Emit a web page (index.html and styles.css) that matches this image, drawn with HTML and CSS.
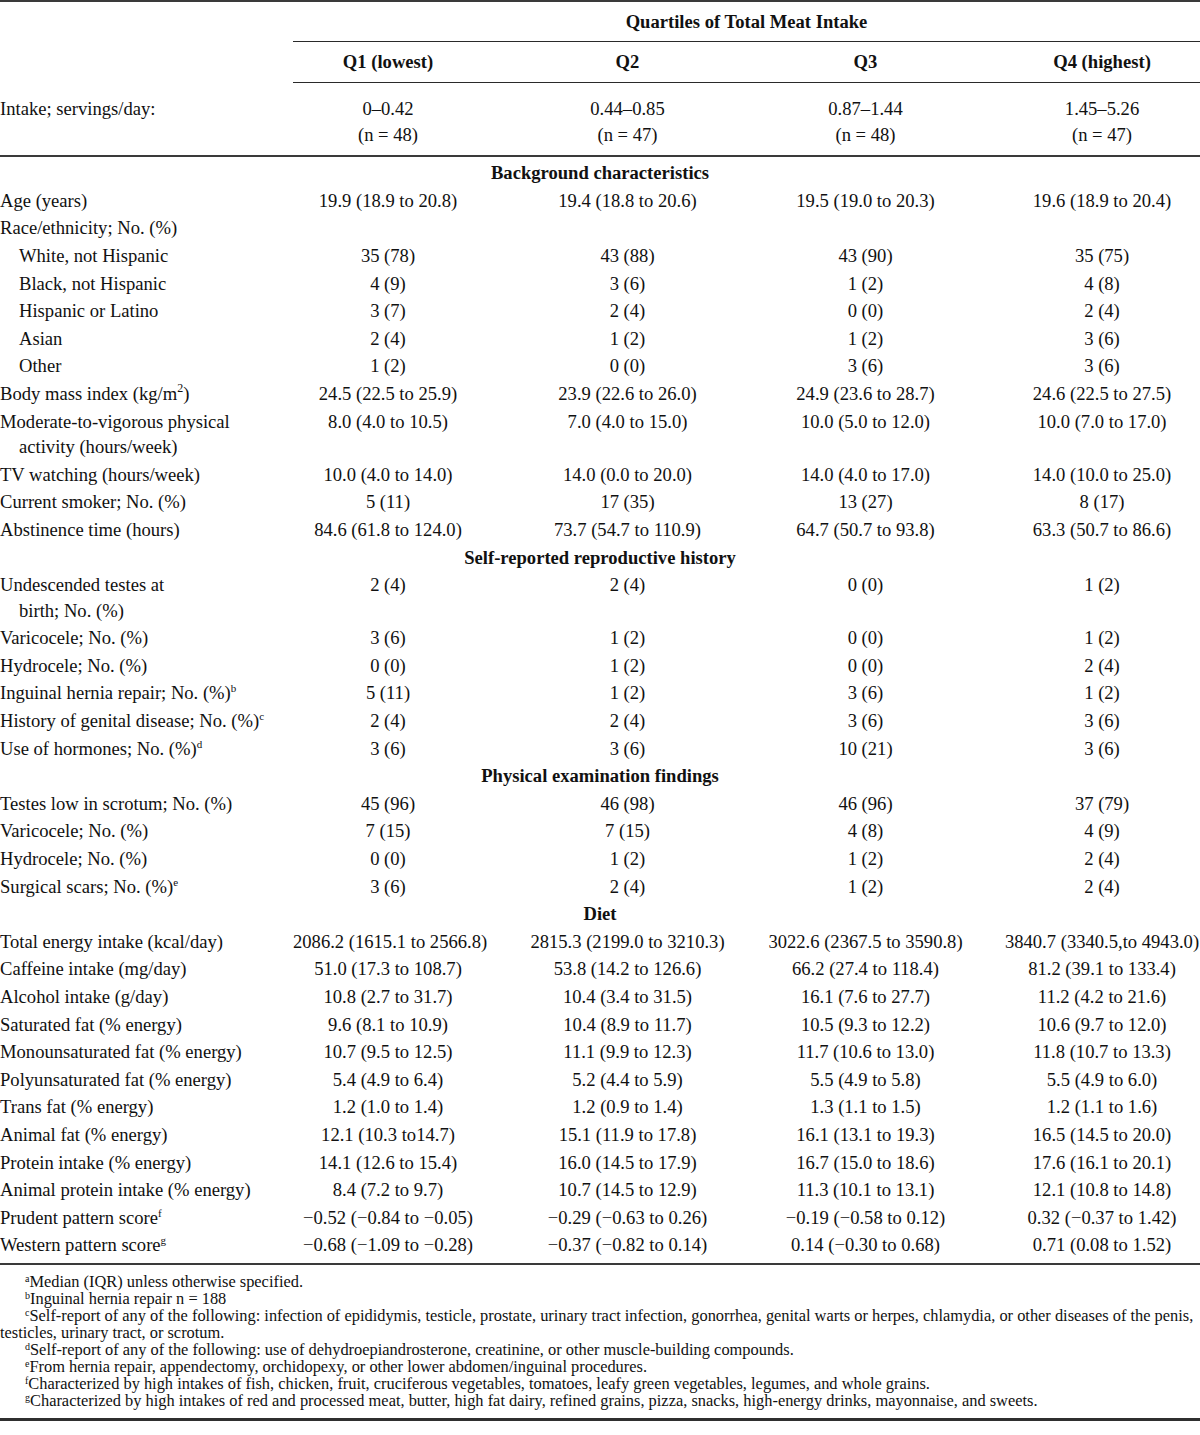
FILE: index.html
```html
<!DOCTYPE html>
<html lang="en">
<head>
<meta charset="utf-8">
<title>Characteristics by quartiles of total meat intake</title>
<link rel="stylesheet" href="styles.css">
</head>
<body>
<div class="page">
<table class="tbl">
  <colgroup>
    <col class="c-label">
    <col class="c-q1">
    <col class="c-q2">
    <col class="c-q3">
    <col class="c-q4">
  </colgroup>
  <thead>
    <tr class="h1">
      <th class="blank"></th>
      <th class="span" colspan="4">Quartiles of Total Meat Intake</th>
    </tr>
    <tr class="h2">
      <th class="blank"></th>
      <th class="q q1">Q1 (lowest)</th>
      <th class="q q2">Q2</th>
      <th class="q q3">Q3</th>
      <th class="q q4">Q4 (highest)</th>
    </tr>
    <tr class="h3">
      <td class="lbl">Intake; servings/day:</td>
      <td class="v q1">0–0.42<br>(n = 48)</td>
      <td class="v q2">0.44–0.85<br>(n = 47)</td>
      <td class="v q3">0.87–1.44<br>(n = 48)</td>
      <td class="v q4">1.45–5.26<br>(n = 47)</td>
    </tr>
  </thead>
  <tbody>
    <tr class="sec first"><td colspan="5">Background characteristics</td></tr>
    <tr><td class="lbl">Age (years)</td><td class="v q1">19.9 (18.9 to 20.8)</td><td class="v q2">19.4 (18.8 to 20.6)</td><td class="v q3">19.5 (19.0 to 20.3)</td><td class="v q4">19.6 (18.9 to 20.4)</td></tr>
    <tr><td class="lbl">Race/ethnicity; No. (%)</td><td class="v q1"></td><td class="v q2"></td><td class="v q3"></td><td class="v q4"></td></tr>
    <tr><td class="lbl sub">White, not Hispanic</td><td class="v q1">35 (78)</td><td class="v q2">43 (88)</td><td class="v q3">43 (90)</td><td class="v q4">35 (75)</td></tr>
    <tr><td class="lbl sub">Black, not Hispanic</td><td class="v q1">4 (9)</td><td class="v q2">3 (6)</td><td class="v q3">1 (2)</td><td class="v q4">4 (8)</td></tr>
    <tr><td class="lbl sub">Hispanic or Latino</td><td class="v q1">3 (7)</td><td class="v q2">2 (4)</td><td class="v q3">0 (0)</td><td class="v q4">2 (4)</td></tr>
    <tr><td class="lbl sub">Asian</td><td class="v q1">2 (4)</td><td class="v q2">1 (2)</td><td class="v q3">1 (2)</td><td class="v q4">3 (6)</td></tr>
    <tr><td class="lbl sub">Other</td><td class="v q1">1 (2)</td><td class="v q2">0 (0)</td><td class="v q3">3 (6)</td><td class="v q4">3 (6)</td></tr>
    <tr><td class="lbl">Body mass index (kg/m<sup class="sq">2</sup>)</td><td class="v q1">24.5 (22.5 to 25.9)</td><td class="v q2">23.9 (22.6 to 26.0)</td><td class="v q3">24.9 (23.6 to 28.7)</td><td class="v q4">24.6 (22.5 to 27.5)</td></tr>
    <tr><td class="lbl">Moderate-to-vigorous physical<br><span class="wrap">activity (hours/week)</span></td><td class="v q1">8.0 (4.0 to 10.5)</td><td class="v q2">7.0 (4.0 to 15.0)</td><td class="v q3">10.0 (5.0 to 12.0)</td><td class="v q4">10.0 (7.0 to 17.0)</td></tr>
    <tr><td class="lbl">TV watching (hours/week)</td><td class="v q1">10.0 (4.0 to 14.0)</td><td class="v q2">14.0 (0.0 to 20.0)</td><td class="v q3">14.0 (4.0 to 17.0)</td><td class="v q4">14.0 (10.0 to 25.0)</td></tr>
    <tr><td class="lbl">Current smoker; No. (%)</td><td class="v q1">5 (11)</td><td class="v q2">17 (35)</td><td class="v q3">13 (27)</td><td class="v q4">8 (17)</td></tr>
    <tr><td class="lbl">Abstinence time (hours)</td><td class="v q1">84.6 (61.8 to 124.0)</td><td class="v q2">73.7 (54.7 to 110.9)</td><td class="v q3">64.7 (50.7 to 93.8)</td><td class="v q4">63.3 (50.7 to 86.6)</td></tr>

    <tr class="sec"><td colspan="5">Self-reported reproductive history</td></tr>
    <tr><td class="lbl">Undescended testes at<br><span class="wrap">birth; No. (%)</span></td><td class="v q1">2 (4)</td><td class="v q2">2 (4)</td><td class="v q3">0 (0)</td><td class="v q4">1 (2)</td></tr>
    <tr><td class="lbl">Varicocele; No. (%)</td><td class="v q1">3 (6)</td><td class="v q2">1 (2)</td><td class="v q3">0 (0)</td><td class="v q4">1 (2)</td></tr>
    <tr><td class="lbl">Hydrocele; No. (%)</td><td class="v q1">0 (0)</td><td class="v q2">1 (2)</td><td class="v q3">0 (0)</td><td class="v q4">2 (4)</td></tr>
    <tr><td class="lbl">Inguinal hernia repair; No. (%)<sup>b</sup></td><td class="v q1">5 (11)</td><td class="v q2">1 (2)</td><td class="v q3">3 (6)</td><td class="v q4">1 (2)</td></tr>
    <tr><td class="lbl">History of genital disease; No. (%)<sup>c</sup></td><td class="v q1">2 (4)</td><td class="v q2">2 (4)</td><td class="v q3">3 (6)</td><td class="v q4">3 (6)</td></tr>
    <tr><td class="lbl">Use of hormones; No. (%)<sup>d</sup></td><td class="v q1">3 (6)</td><td class="v q2">3 (6)</td><td class="v q3">10 (21)</td><td class="v q4">3 (6)</td></tr>

    <tr class="sec"><td colspan="5">Physical examination findings</td></tr>
    <tr><td class="lbl">Testes low in scrotum; No. (%)</td><td class="v q1">45 (96)</td><td class="v q2">46 (98)</td><td class="v q3">46 (96)</td><td class="v q4">37 (79)</td></tr>
    <tr><td class="lbl">Varicocele; No. (%)</td><td class="v q1">7 (15)</td><td class="v q2">7 (15)</td><td class="v q3">4 (8)</td><td class="v q4">4 (9)</td></tr>
    <tr><td class="lbl">Hydrocele; No. (%)</td><td class="v q1">0 (0)</td><td class="v q2">1 (2)</td><td class="v q3">1 (2)</td><td class="v q4">2 (4)</td></tr>
    <tr><td class="lbl">Surgical scars; No. (%)<sup>e</sup></td><td class="v q1">3 (6)</td><td class="v q2">2 (4)</td><td class="v q3">1 (2)</td><td class="v q4">2 (4)</td></tr>

    <tr class="sec"><td colspan="5">Diet</td></tr>
    <tr><td class="lbl">Total energy intake (kcal/day)</td><td class="v q1">2086.2 (1615.1 to 2566.8)</td><td class="v q2">2815.3 (2199.0 to 3210.3)</td><td class="v q3">3022.6 (2367.5 to 3590.8)</td><td class="v q4">3840.7 (3340.5,to 4943.0)</td></tr>
    <tr><td class="lbl">Caffeine intake (mg/day)</td><td class="v q1">51.0 (17.3 to 108.7)</td><td class="v q2">53.8 (14.2 to 126.6)</td><td class="v q3">66.2 (27.4 to 118.4)</td><td class="v q4">81.2 (39.1 to 133.4)</td></tr>
    <tr><td class="lbl">Alcohol intake (g/day)</td><td class="v q1">10.8 (2.7 to 31.7)</td><td class="v q2">10.4 (3.4 to 31.5)</td><td class="v q3">16.1 (7.6 to 27.7)</td><td class="v q4">11.2 (4.2 to 21.6)</td></tr>
    <tr><td class="lbl">Saturated fat (% energy)</td><td class="v q1">9.6 (8.1 to 10.9)</td><td class="v q2">10.4 (8.9 to 11.7)</td><td class="v q3">10.5 (9.3 to 12.2)</td><td class="v q4">10.6 (9.7 to 12.0)</td></tr>
    <tr><td class="lbl">Monounsaturated fat (% energy)</td><td class="v q1">10.7 (9.5 to 12.5)</td><td class="v q2">11.1 (9.9 to 12.3)</td><td class="v q3">11.7 (10.6 to 13.0)</td><td class="v q4">11.8 (10.7 to 13.3)</td></tr>
    <tr><td class="lbl">Polyunsaturated fat (% energy)</td><td class="v q1">5.4 (4.9 to 6.4)</td><td class="v q2">5.2 (4.4 to 5.9)</td><td class="v q3">5.5 (4.9 to 5.8)</td><td class="v q4">5.5 (4.9 to 6.0)</td></tr>
    <tr><td class="lbl">Trans fat (% energy)</td><td class="v q1">1.2 (1.0 to 1.4)</td><td class="v q2">1.2 (0.9 to 1.4)</td><td class="v q3">1.3 (1.1 to 1.5)</td><td class="v q4">1.2 (1.1 to 1.6)</td></tr>
    <tr><td class="lbl">Animal fat (% energy)</td><td class="v q1">12.1 (10.3 to14.7)</td><td class="v q2">15.1 (11.9 to 17.8)</td><td class="v q3">16.1 (13.1 to 19.3)</td><td class="v q4">16.5 (14.5 to 20.0)</td></tr>
    <tr><td class="lbl">Protein intake (% energy)</td><td class="v q1">14.1 (12.6 to 15.4)</td><td class="v q2">16.0 (14.5 to 17.9)</td><td class="v q3">16.7 (15.0 to 18.6)</td><td class="v q4">17.6 (16.1 to 20.1)</td></tr>
    <tr><td class="lbl">Animal protein intake (% energy)</td><td class="v q1">8.4 (7.2 to 9.7)</td><td class="v q2">10.7 (14.5 to 12.9)</td><td class="v q3">11.3 (10.1 to 13.1)</td><td class="v q4">12.1 (10.8 to 14.8)</td></tr>
    <tr><td class="lbl">Prudent pattern score<sup>f</sup></td><td class="v q1">−0.52 (−0.84 to −0.05)</td><td class="v q2">−0.29 (−0.63 to 0.26)</td><td class="v q3">−0.19 (−0.58 to 0.12)</td><td class="v q4">0.32 (−0.37 to 1.42)</td></tr>
    <tr class="last"><td class="lbl">Western pattern score<sup>g</sup></td><td class="v q1">−0.68 (−1.09 to −0.28)</td><td class="v q2">−0.37 (−0.82 to 0.14)</td><td class="v q3">0.14 (−0.30 to 0.68)</td><td class="v q4">0.71 (0.08 to 1.52)</td></tr>
  </tbody>
</table>
<div class="notes">
  <p><sup>a</sup>Median (IQR) unless otherwise specified.</p>
  <p><sup>b</sup>Inguinal hernia repair n = 188</p>
  <p><sup>c</sup>Self-report of any of the following: infection of epididymis, testicle, prostate, urinary tract infection, gonorrhea, genital warts or herpes, chlamydia, or other diseases of the penis,<br>testicles, urinary tract, or scrotum.</p>
  <p><sup>d</sup>Self-report of any of the following: use of dehydroepiandrosterone, creatinine, or other muscle-building compounds.</p>
  <p><sup>e</sup>From hernia repair, appendectomy, orchidopexy, or other lower abdomen/inguinal procedures.</p>
  <p><sup>f</sup>Characterized by high intakes of fish, chicken, fruit, cruciferous vegetables, tomatoes, leafy green vegetables, legumes, and whole grains.</p>
  <p><sup>g</sup>Characterized by high intakes of red and processed meat, butter, high fat dairy, refined grains, pizza, snacks, high-energy drinks, mayonnaise, and sweets.</p>
</div>
</div>
</body>
</html>
```

FILE: styles.css
```css
html, body {
  margin: 0;
  padding: 0;
  background: #ffffff;
}

.page {
  width: 1200px;
  font-family: "Liberation Serif", "Times New Roman", serif;
  color: #111111;
}

.tbl {
  width: 1200px;
  table-layout: fixed;
  border-collapse: separate;
  border-spacing: 0;
  border-top: 2px solid #3a3a3a;
  border-bottom: 2px solid #3a3a3a;
  font-size: 18.6px;
}

.c-label { width: 293px; }
.c-q1 { width: 215px; }
.c-q2 { width: 239px; }
.c-q3 { width: 237px; }
.c-q4 { width: 216px; }

.tbl th,
.tbl td {
  padding: 1px 0;
  line-height: 25.6px;
  vertical-align: top;
  white-space: nowrap;
  font-weight: normal;
}

/* header rows */
.h1 th {
  height: 39px;
  padding: 0;
  vertical-align: middle;
}
.h1 .span {
  font-weight: bold;
  text-align: center;
  border-bottom: 1px solid #2a2a2a;
}

.h2 th {
  height: 40px;
  padding: 0;
  vertical-align: middle;
}
.h2 .q {
  font-weight: bold;
  border-bottom: 1px solid #2a2a2a;
}

.h3 td {
  padding: 13px 0 8px;
  border-bottom: 2px solid #3a3a3a;
}

/* value columns */
.v, .q {
  text-align: center;
}
.q1 { padding-right: 25px !important; }
.q4 { padding-left: 20px !important; }

/* labels */
.lbl {
  text-align: left;
}
.lbl.sub {
  padding-left: 19px;
}
.wrap {
  padding-left: 19px;
}

.tbl sup {
  font-size: 11px;
  line-height: 0;
  vertical-align: 7px;
}
.tbl sup.sq {
  font-size: 12px;
  vertical-align: 8px;
}

/* section headings */
.sec td {
  font-weight: bold;
  text-align: center;
}
.sec.first td {
  padding-top: 3px;
}

.last td {
  padding-bottom: 5px;
}

/* footnotes */
.notes {
  padding: 8px 0 9px;
  border-bottom: 3px solid #2f2f2f;
  font-size: 16.4px;
  line-height: 17px;
}
.notes p {
  margin: 0;
  text-indent: 25px;
  white-space: nowrap;
}
.notes sup {
  font-size: 10px;
  line-height: 0;
  vertical-align: 5px;
}
```
